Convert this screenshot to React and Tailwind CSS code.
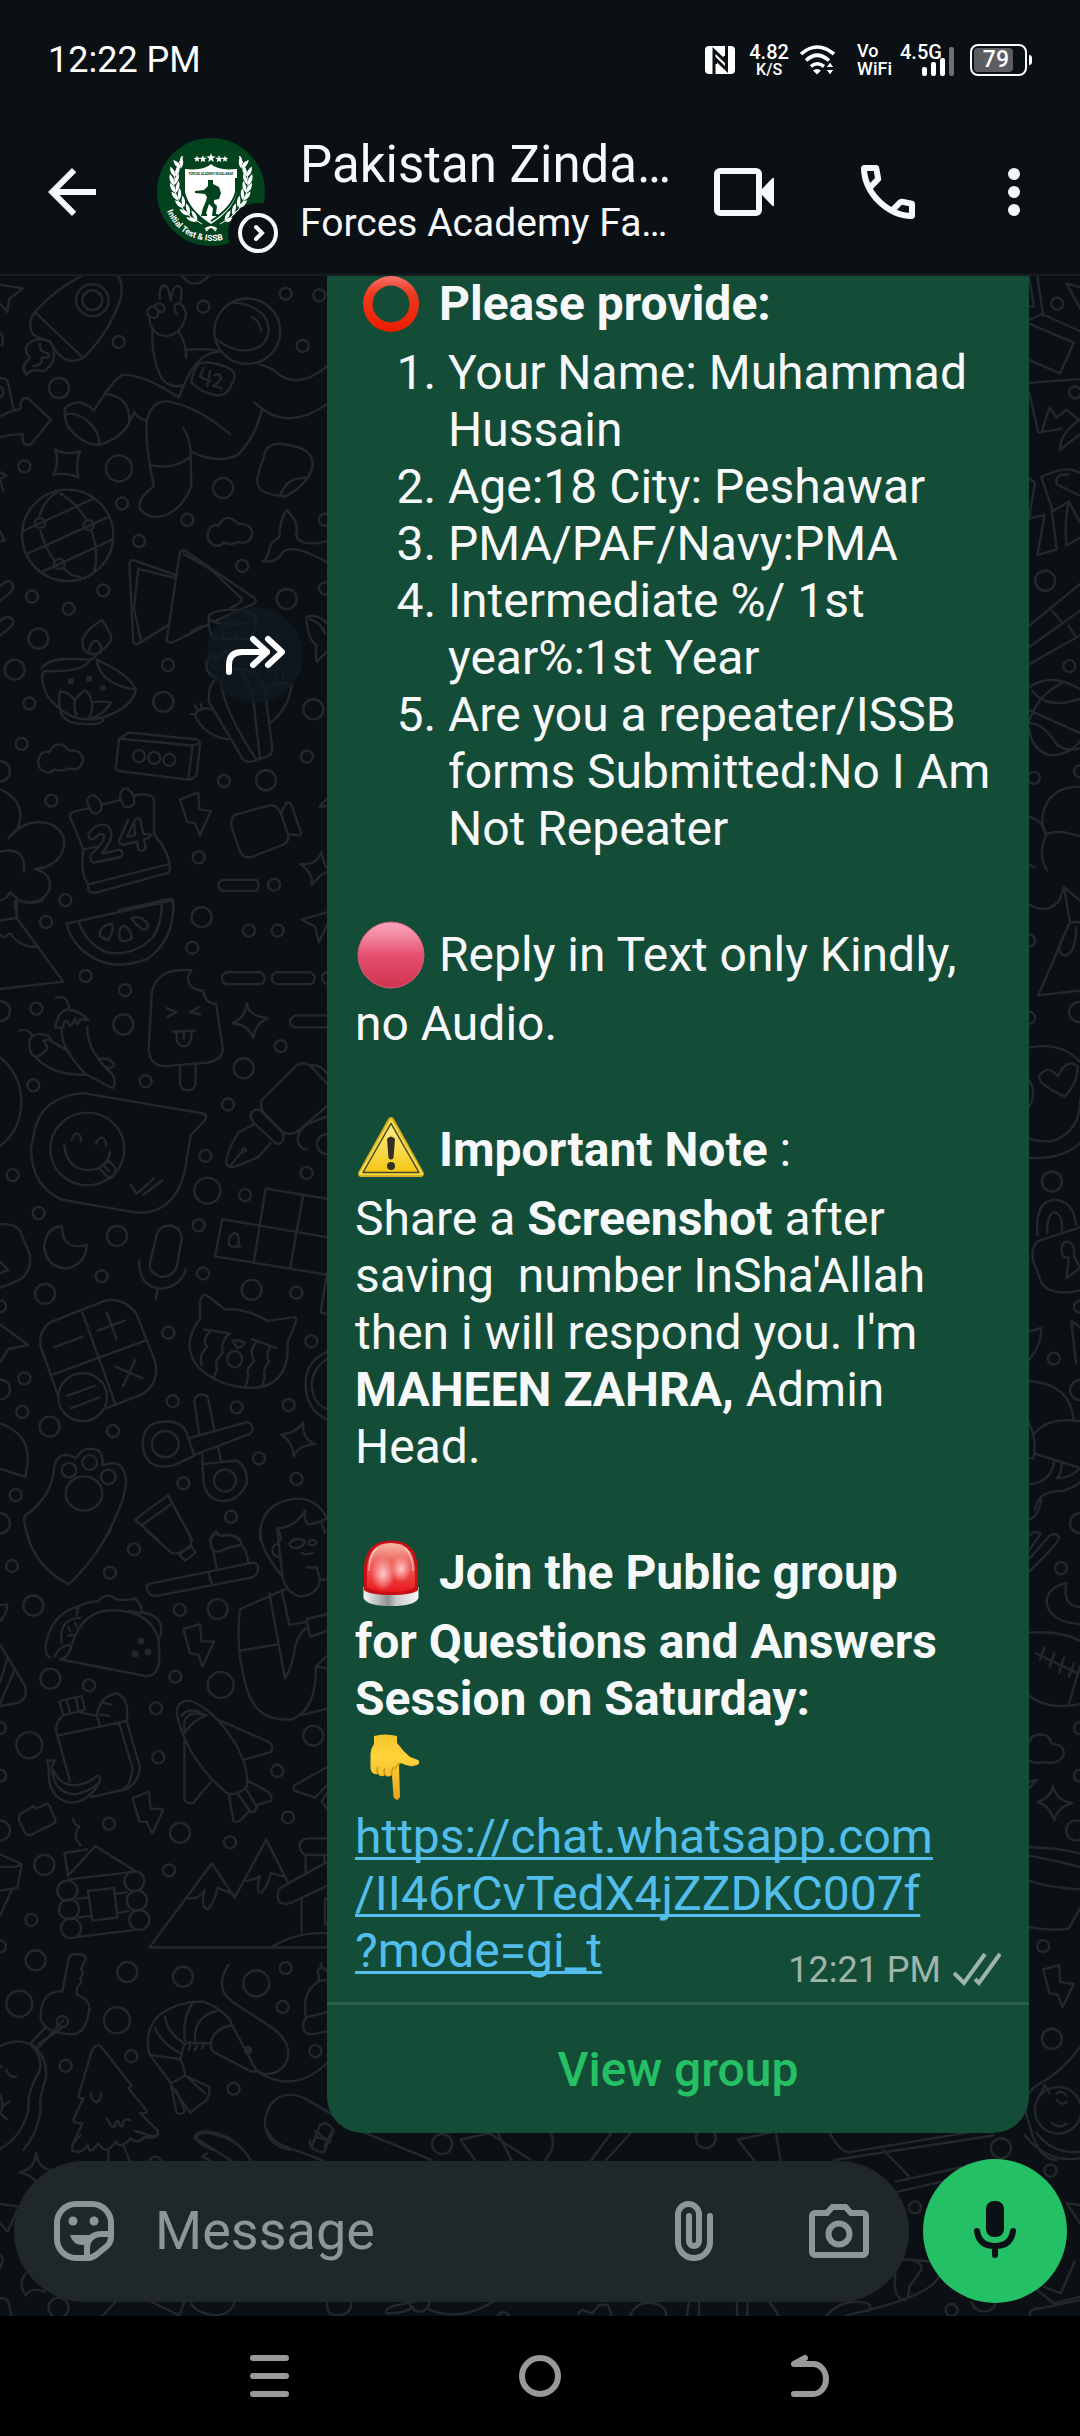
const DOT_SIZES = { s: 6, m: 10, l: 13 };

// Wallpaper doodles. Every tile keeps its own drawing units and is scaled into place.
const TILES = [
  {
    x: 0,
    y: 270,
    sx: 0.3333,
    sy: 0.4082,
    s: [[610, 90], [857, 58], [958, 62], [908, 186], [356, 176], [73, 481], [366, 572], [562, 612], [417, 664], [96, 800], [206, 830], [310, 785], [727, 725], [504, 968], [88, 1062], [65, 1161], [921, 1192], [672, 1252], [154, 1300], [596, 1439], [822, 1506], [196, 1544], [975, 612], [975, 780], [417, 1191], [463, 1195], [508, 1200]],
    m: [[177, 289], [669, 534], [115, 903], [44, 979], [490, 1058], [860, 806], [940, 1076], [798, 1250], [0, 1228]],
    l: [[357, 486]],
    paths: [
      // rocket
      "M250 12Q160 50 105 103Q80 130 98 157Q120 170 150 175Q190 240 250 216Q330 150 362 70Q372 30 350 12M105 103L250 216",
      "M228 74a49 39 0 1 0 98 0a49 39 0 1 0 -98 0M247 74a30 24 0 1 0 60 0a30 24 0 1 0 -60 0",
      "M160 190Q150 165 110 170Q70 180 80 205Q95 215 82 222Q60 240 80 257Q90 240 130 248Q170 230 160 190M120 180Q115 200 145 205Q155 215 125 215Q130 235 100 235",
      // arrow and star at the left edge
      "M0 36L68 45L27 72L22 103L0 82M0 265Q20 262 25 280L42 344M0 358Q35 345 62 340V325Q70 310 85 315L153 367L95 425Q75 435 68 418V402Q30 402 0 410M0 285Q12 290 10 303Q5 310 0 312M0 155Q15 160 5 185",
      // astronaut
      "M643 150a99 80 0 1 0 198 0a99 80 0 1 0 -198 0M650 170Q720 215 785 185Q825 150 790 110Q750 80 697 80M755 115Q780 125 783 150",
      "M447 112Q450 160 500 162Q550 155 558 108Q550 75 525 85Q520 100 532 108M442 100Q455 82 472 95Q480 115 462 118Q440 115 442 100M466 85Q485 75 495 95Q490 108 476 100M480 70Q475 40 495 38Q505 38 512 75Q520 30 540 42Q550 50 540 80",
      "M457 152Q455 220 485 265Q510 290 545 283M536 152Q560 180 558 216M558 196Q620 190 663 200Q590 200 550 285L536 312",
      "M780 232Q810 235 840 258Q900 290 981 236M764 325Q860 400 981 328M574 275Q580 240 600 228Q640 222 690 242Q715 255 695 280Q680 310 650 307Q600 300 574 275",
      "M610 240L600 262L632 272M630 248L622 285M642 258Q665 250 662 268Q650 280 640 284L665 290",
      "M536 312Q430 255 370 257Q345 262 282 344Q240 310 200 335Q185 350 205 385Q250 430 300 428Q370 410 390 370L403 348Q415 365 440 368M320 304Q390 310 388 372M194 355Q230 345 270 375Q300 400 297 428",
      "M440 368Q460 310 520 325Q600 340 690 402M440 368Q435 430 462 530Q410 560 420 585Q445 615 500 600Q550 580 574 530L572 450Q570 410 550 388M452 478Q520 490 572 458M572 445Q650 475 710 455Q760 420 785 345",
      // sticker, whale tail
      "M798 440Q815 422 850 427Q900 432 920 445Q945 462 935 490Q915 530 855 555Q800 550 785 540Q765 525 775 500ZM842 552Q860 505 922 510",
      "M860 588Q840 610 838 655Q810 665 805 695Q800 710 788 713Q830 720 850 690Q880 670 981 716M860 588Q900 620 888 650Q900 680 981 664",
      // clouds
      "M645 675Q615 665 625 640Q635 620 655 627Q680 590 715 622Q755 620 757 645Q750 675 715 666Q690 675 670 668Q660 678 645 675Z",
      "M137 1230Q107 1220 117 1195Q127 1175 147 1182Q172 1145 207 1177Q247 1175 249 1200Q242 1230 207 1221Q182 1230 162 1223Q152 1233 137 1230Z",
      "M165 440Q205 455 240 444Q225 475 235 508Q200 495 160 502Q180 470 165 440Z",
      // globe
      "M66 650a137 112 0 1 0 274 0a137 112 0 1 0 -274 0M68 640L280 560M80 696L325 605M125 740L338 660M170 545Q130 565 118 605M122 640Q135 680 165 715M180 547Q235 575 262 615M275 640Q300 700 280 742M190 730Q210 750 240 752M104 620a16 12 0 1 0 32 0a16 12 0 1 0 -32 0M250 625a16 12 0 1 0 32 0a16 12 0 1 0 -32 0M162 720a16 12 0 1 0 32 0a16 12 0 1 0 -32 0",
      // folded map
      "M388 718Q392 708 405 712L530 748M388 718L400 912Q408 920 418 914L505 870M415 732L528 755M415 732L402 830L422 905M540 690Q550 683 560 690L765 805Q772 812 760 818L640 862M540 690L500 908Q505 915 520 912L625 868M550 695L635 735L725 805Q728 815 690 828M565 895Q590 870 625 872",
      "M0 775Q30 750 40 775Q40 790 0 810M0 860Q25 840 40 860Q45 870 0 895M0 495L20 504L0 512L10 542M0 640L14 662L0 665",
      // diya lamp
      "M125 975Q150 945 268 955Q290 950 290 940Q340 915 333 895L307 857Q240 890 248 920Q255 945 290 940M268 955Q260 985 132 983Q118 1000 140 1040Q200 1110 290 1100Q390 1080 408 1030Q390 990 290 955Q300 1015 408 1028M268 932Q270 910 290 908Q310 920 300 940M180 1075Q175 1050 180 1032Q210 1035 225 1055Q240 1035 257 1030Q275 1045 275 1060Q310 1055 333 1060Q310 1090 275 1098M180 1075Q185 1110 250 1112Q310 1115 310 1100M230 1090Q220 1075 225 1055M268 1095Q280 1075 275 1060",
      // radio and calendar
      "M357 1150L385 1133L590 1150Q602 1155 600 1165L590 1235Q580 1250 560 1248L360 1228Q345 1225 348 1215ZM357 1148L575 1165L600 1160M578 1165L565 1245",
      "M210 1340Q205 1325 265 1320M302 1310L362 1298M400 1288Q460 1278 462 1300V1382Q510 1430 510 1465Q510 1480 490 1480L290 1525Q260 1530 265 1505Q240 1480 250 1420L210 1340M250 1420L300 1410M265 1505L510 1455M262 1305Q262 1285 283 1287Q310 1300 304 1322Q290 1338 275 1328ZM360 1290Q362 1268 382 1270Q408 1285 402 1308Q385 1322 370 1312Z",
      "M265 1382Q290 1350 325 1362Q340 1380 330 1400L305 1430L360 1420Q375 1430 362 1438L280 1452Q265 1445 275 1430Q315 1400 312 1385Q300 1375 285 1392Q268 1400 265 1382ZM385 1347L358 1395Q355 1408 370 1408L412 1400L415 1420Q430 1428 437 1415L432 1395Q455 1390 452 1382L430 1382L420 1345Q410 1340 402 1350L405 1385L382 1388L402 1352",
      // cactus behind the forward button
      "M626 850a71 18 0 1 0 142 0a71 18 0 1 0 -142 0M626 850Q625 900 650 904H745Q770 890 768 850M670 888V900M712 888V900M620 960L640 940L650 955L680 930L690 970M620 960Q615 990 650 1000Q620 1020 628 1060L730 1200Q745 1210 770 1200L805 1190Q820 1185 816 1165L795 1030Q780 980 710 975Q660 985 665 1020Q680 1090 770 1200M710 975Q760 1010 765 1090L780 1195M800 1030Q830 1000 875 1018Q865 1075 810 1110M640 1078Q600 1065 585 1090Q610 1140 685 1150M572 1088L582 1088M585 1065L590 1075M602 1062L605 1073M825 985L830 1000M850 985L848 1000",
      // bolt and camera
      "M540 1297L595 1280L598 1322L633 1325L600 1385L585 1355L562 1352Z",
      "M705 1335L805 1312Q830 1308 842 1330L865 1385Q868 1400 850 1408L755 1438Q730 1442 720 1425L695 1365Q690 1345 705 1335ZM842 1330L860 1305Q870 1302 875 1312L902 1375Q905 1385 895 1385L868 1382",
      "M965 1425Q970 1455 981 1465M965 1425Q950 1460 900 1455Q940 1475 935 1507Q960 1480 981 1475M981 1295L958 1315L981 1313",
      "M665 1494H770Q782 1507 770 1521H665Q645 1507 665 1494Z",
      // flower and leaf
      "M0 1272Q80 1300 55 1365L25 1392Q80 1340 150 1357Q210 1380 185 1430Q160 1465 105 1467Q160 1480 148 1520Q120 1560 60 1545L30 1525Q20 1540 0 1545M0 1425Q80 1410 72 1475M45 1545V1568",
      "M920 850Q950 840 981 865M920 850Q920 900 950 920Q945 940 950 960L981 935M930 855Q965 865 975 890",
      "M545 12Q580 55 630 12M355 1568L515 1540L522 1568M483 1550L487 1568",
    ],
  },
  {
    x: 0,
    y: 900,
    sx: 0.3333,
    sy: 0.4082,
    s: [[138, 54], [257, 186], [375, 221], [109, 266], [577, 117], [747, 75], [833, 75], [842, 358], [100, 454], [437, 444], [684, 501], [38, 674], [616, 627], [920, 669], [735, 723], [116, 767], [596, 797], [305, 922], [609, 915], [889, 962], [505, 1060], [934, 1081], [73, 1172], [67, 1254], [518, 1228], [710, 1243], [866, 1237], [339, 1301], [777, 1368], [890, 1418], [550, 1429], [47, 1458], [693, 1511], [0, 995]],
    m: [[605, 42], [370, 305], [731, 412], [351, 823], [135, 965], [755, 955], [149, 1290], [0, 272], [0, 1199], [0, 1527], [981, 598]],
    l: [[622, 712]],
    paths: [
      // tent and watermelon
      "M0 50L50 44L190 200L0 218M50 0V44M0 85Q10 95 20 88Q30 75 38 90Q70 118 110 114M50 0Q90 15 130 0",
      "M200 58L520 0Q525 100 440 145Q330 180 250 125Q210 95 200 58M235 52Q260 110 320 128Q400 140 460 90Q490 50 484 0M300 88Q295 65 335 58Q345 70 325 98Q308 95 300 88M358 88Q355 65 375 63Q395 75 395 95Q370 105 360 98ZM395 45Q420 35 443 58Q445 75 430 73Q405 60 395 45",
      // ice pop
      "M575 172Q460 165 455 235L446 365Q450 410 500 407L625 398Q675 390 667 355L648 254Q615 255 610 222Q560 220 565 185ZM540 405V450Q545 467 565 466Q585 465 587 450V402M500 265L530 275L503 286M598 262L570 275L600 280M518 322L585 320M530 325V345Q540 362 560 357Q575 350 575 322M552 325V340",
      // chillies
      "M168 240Q205 230 208 270M165 312Q180 260 215 270Q245 275 265 295L240 292Q232 315 225 290Q210 320 205 300Q190 290 190 312ZM185 315Q180 360 255 425Q330 460 340 460Q350 440 335 425Q260 370 262 310M58 320Q85 315 97 332M90 365Q80 330 120 328Q150 330 152 340L130 345Q160 365 110 385Q90 380 90 365ZM150 345Q190 360 210 375M110 388Q160 430 260 428M295 390Q335 385 343 405Q335 415 315 408",
      // dashes
      "M680 177H780Q795 182 794 192Q792 205 780 206H680Q665 203 666 190Q668 180 680 177ZM830 177H930Q945 182 944 192Q942 205 930 206H830Q815 203 816 190Q818 180 830 177ZM981 177Q965 180 966 192Q970 205 981 205M981 283H885Q870 290 870 298Q873 310 885 312H981",
      "M741 253Q745 285 803 289Q765 305 760 338Q745 305 697 302Q735 290 741 253ZM981 30L905 48L945 65L957 104L981 60",
      // speech bubble with a face
      "M250 473L610 523Q620 525 617 537L572 577L553 670Q520 770 410 766L190 735Q95 705 93 610L105 560Q130 480 250 473ZM151 610a111 89 0 1 0 222 0a111 89 0 1 0 -222 0M215 588Q220 570 235 573Q245 580 243 592M288 598Q295 580 310 583Q320 592 317 602M193 600Q200 660 265 662Q320 660 330 618M298 658Q310 645 328 640L345 655Q350 675 330 683ZM312 650L328 665M392 698L410 720L462 682M430 722L488 686",
      "M0 385Q65 430 64 495Q60 570 0 602",
      // pen
      "M785 490L890 405Q910 395 930 405L981 450M785 490Q780 505 790 520L850 570Q875 578 895 565L981 505M752 530Q755 510 780 515L850 572Q855 595 830 598L760 545ZM765 548L715 570Q690 600 678 640Q680 655 700 655L775 630L812 595M690 652L730 612M981 530L920 550Q885 575 895 595Q905 612 920 610M935 405Q965 405 981 425",
      // tiles
      "M797 707L981 732M797 707L762 885M667 782L981 826M667 782L645 873L981 918M910 722L870 903M981 915L962 1010L981 1014M715 845Q720 820 705 815Q680 825 688 845Q700 855 715 845Q712 855 722 848",
      // moon and microphone
      "M186 800Q185 860 260 845Q260 890 200 903Q140 900 132 850Q140 800 186 800Z",
      "M470 820Q480 795 515 798Q545 805 545 830L530 900Q515 925 480 923Q445 910 450 890ZM418 883Q415 945 480 952Q540 950 558 905M473 952L467 977",
      // calculator
      "M150 1035L310 983Q370 970 410 1015L465 1130Q480 1180 430 1210L320 1245M150 1035Q115 1055 122 1095L175 1215M247 1010L347 1237M158 1163L438 1079M163 1096L247 1070M292 1055L376 1030M320 1010L350 1076M347 1143L427 1172M406 1127L369 1191M175 1218a73 59 0 1 0 146 0a73 59 0 1 0 -146 0M201 1215L284 1190M214 1245L297 1219",
      "M0 795Q40 790 60 810L90 870Q95 910 60 930L0 950M0 885L25 907L0 914M0 1040L85 1090L25 1100L0 1132",
      // cat
      "M600 1025L600 985Q605 965 618 967L675 1003Q740 1000 803 1031L885 1022Q892 1025 887 1035L863 1083Q870 1190 760 1195Q660 1195 595 1145Q540 1090 600 1025ZM612 1052L690 1062M757 1076L828 1098M628 1058Q605 1080 622 1095Q595 1115 605 1140M683 1065Q660 1090 668 1110Q640 1130 652 1150L640 1172M768 1085Q745 1105 763 1130Q735 1150 745 1165L738 1190M808 1098Q795 1120 808 1130Q785 1155 795 1168L787 1190M697 1080Q715 1075 735 1085Q725 1097 712 1097ZM682 1125a22 20 0 1 0 44 0a22 20 0 1 0 -44 0",
      // scissors
      "M456 1333a40 32 0 1 0 80 0a40 32 0 1 0 -80 0M583 1362L520 1385Q440 1400 428 1340Q425 1280 490 1278Q545 1275 560 1305ZM570 1318L740 1279Q760 1282 757 1300L750 1308L588 1358M597 1308L583 1225Q590 1208 612 1212Q625 1215 625 1225L643 1298M607 1358V1382L710 1373Q745 1390 740 1430Q715 1475 660 1472Q620 1465 612 1430L607 1382M655 1340L662 1372M642 1422a33 27 0 1 0 66 0a33 27 0 1 0 -66 0",
      "M910 1280Q905 1320 946 1333Q895 1335 881 1363Q878 1325 843 1310Q890 1305 910 1280ZM981 1107Q915 1130 917 1190Q920 1250 981 1272M981 1125Q935 1150 935 1190Q940 1235 981 1247",
      // paw
      "M88 1568Q70 1530 73 1510Q160 1460 163 1385Q180 1345 228 1368Q250 1335 295 1348Q310 1360 308 1385Q370 1365 378 1420Q380 1470 312 1568M185 1397a22 18 0 1 0 44 0a22 18 0 1 0 -44 0M247 1378a22 18 0 1 0 44 0a22 18 0 1 0 -44 0M303 1413a22 18 0 1 0 44 0a22 18 0 1 0 -44 0M197 1454a55 42 0 1 0 110 0a55 42 0 1 0 -110 0",
      "M0 1282Q95 1310 82 1385L76 1413L0 1393M405 1518L504 1458L577 1568M405 1518L475 1568M428 1530L518 1478M630 1568L648 1548L660 1558Q700 1550 722 1568",
      "M780 1568Q775 1480 880 1467Q950 1462 981 1515M832 1540Q850 1568 840 1568M832 1540Q890 1535 915 1495Q910 1520 925 1530Q950 1528 981 1515M965 1525L975 1550",
    ],
  },
  {
    x: 0,
    y: 1530,
    sx: 0.3333,
    sy: 0.3954,
    s: [[402, 49], [36, 91], [330, 108], [539, 202], [267, 393], [526, 371], [468, 451], [475, 575], [832, 609], [864, 727], [327, 743], [690, 790], [507, 861], [94, 986], [857, 1108], [848, 1206], [946, 1318], [394, 1331], [197, 1355], [701, 1413], [0, 621], [0, 1053], [0, 501]],
    m: [[100, 191], [653, 200], [151, 376], [940, 520], [540, 766], [133, 847], [107, 1088], [382, 1118], [549, 1130], [0, 760], [202, 912], [207, 959], [213, 1007], [403, 888], [411, 937], [418, 986]],
    l: [[662, 392], [88, 544], [769, 1147], [58, 1198], [351, 1240]],
    paths: [
      "M78 0Q100 90 205 137Q260 100 332 0M437 0L515 58Q540 65 572 38Q580 30 560 0M538 62L573 40L587 57L555 78Z",
      // toothbrush
      "M440 145Q440 135 455 135L755 83Q780 82 773 105Q770 115 755 120L475 166Q445 170 440 145ZM625 108L635 135M650 98L640 52Q620 25 648 3Q655 20 680 12Q720 15 725 38Q740 50 745 82M640 52Q660 58 670 50Q700 40 725 38",
      // bearded man
      "M780 0Q780 50 845 115M832 0L848 120Q860 160 900 168Q955 165 960 125L950 95L922 95M838 35Q815 35 817 55Q825 70 842 68M868 35Q885 15 915 28Q910 45 890 45Q870 45 868 35M925 35Q930 20 948 28Q950 40 930 38M905 58Q920 65 938 58M960 125H981M855 150L720 200Q705 300 740 400Q770 490 880 478Q950 450 948 345L981 318M718 305L830 290M808 160L855 375Q880 340 885 295Q900 255 925 245M845 152L868 240L918 233M920 225L981 213M920 225L930 270L981 255M948 345L981 350M905 468L981 452",
      // taco
      "M150 322Q130 315 140 280Q160 210 235 193Q270 180 295 180Q320 155 350 175Q370 180 405 173Q425 185 425 208Q490 215 483 260Q480 275 475 275Q490 370 440 370L180 327Q205 325 215 290Q250 200 340 203Q450 205 475 275M235 193L230 215M185 285Q175 225 240 222M165 320Q175 295 207 290L215 300M205 245L210 255M225 235L230 245M205 268L218 265M385 205L425 210",
      "M550 250L600 238L605 282L642 282L608 345L595 315L570 312Z",
      "M0 190L22 188Q20 215 0 230M0 290L75 395Q85 430 50 438L0 445M22 325L0 385M45 350L0 440",
      // grocery bag
      "M178 435Q180 430 245 420L255 455L190 468ZM200 432L210 460M228 425L235 455M190 468Q160 490 172 520L380 483Q390 425 350 413Q300 420 290 470L235 460M172 520L210 635M380 483L420 600Q415 640 380 655L275 675M357 487L397 600Q395 645 370 655M290 470L300 495M312 437L335 442M300 467L327 470M142 583H165L155 600Q180 650 230 645Q270 640 290 622Q305 620 297 640Q260 695 200 688Q140 670 147 605ZM155 605Q165 670 230 668Q270 660 297 640",
      // shuttle
      "M530 465Q530 430 570 432Q640 450 710 545Q750 610 740 650Q710 675 680 665Q560 580 530 465ZM555 512Q540 450 620 468Q580 480 555 512M545 470Q560 450 600 460M655 480L805 535Q825 545 812 562L735 580M553 535V680Q560 695 580 690L632 638M687 670L700 735Q715 745 735 722L748 710L710 662M748 710Q765 720 770 700L735 650M770 695L812 685Q820 670 800 660L745 635",
      "M398 678L447 662L452 705L490 706L457 768L440 738L418 737Z",
      "M58 720L100 698L108 705L140 692Q150 695 152 705L167 735Q165 742 155 745L90 772Q80 772 75 765L57 735ZM218 730Q225 748 238 750Q215 775 242 797",
      // cabin
      "M193 817L262 808M193 817L204 870M204 875L286 799L405 862M204 884L405 864M225 1030L400 1012M230 933L263 930M350 920L380 916M235 980L270 976M355 968L385 964M264 913L342 905L353 980L277 988Z",
      "M0 820L65 845L52 905L0 912M65 845L45 852H0M35 912L0 975",
      // mountains and lighthouse
      "M448 1056L636 843L704 930L799 783L863 890M448 1056H981M560 932Q600 935 614 910Q600 960 625 958Q645 940 652 905L700 920M735 888Q765 885 780 875Q765 920 785 917Q810 890 812 868L855 877M815 1055Q890 1015 981 1020M905 930V1018M917 822V870M981 780H920Q895 785 900 805Q905 820 920 822H981M981 840L840 905Q825 925 840 942Q855 950 875 942L981 900M973 822V838M981 932H975V997H981",
      "M981 600L885 645Q875 655 885 660L945 677L981 645M965 687L981 705M965 687L981 665",
      // key
      "M187 1167L207 1080Q215 1070 240 1073Q262 1075 255 1090L243 1110Q255 1120 240 1135Q250 1145 232 1155L230 1175Q280 1190 265 1225Q255 1280 205 1275Q130 1270 122 1235Q120 1165 187 1167ZM170 1243a17 14 0 1 0 34 0a17 14 0 1 0 -34 0M190 1240L115 1310L90 1300L140 1255M182 1262L115 1300",
      // sleeping sausage
      "M0 1305Q55 1285 90 1300Q130 1330 118 1370Q80 1420 85 1470Q60 1540 0 1565M110 1312Q145 1345 137 1390Q115 1440 122 1470Q110 1530 70 1568M20 1365Q25 1385 48 1383M0 1355L5 1358M0 1430Q15 1450 0 1475M5 1460L28 1445M5 1478L20 1490",
      // fir tree
      "M275 1318Q290 1295 305 1308L395 1405L385 1412L440 1468Q440 1478 420 1475L472 1518Q480 1535 455 1533Q430 1525 405 1520M275 1318L235 1432Q240 1440 250 1437L220 1490Q220 1502 248 1500L217 1555M272 1425Q275 1445 290 1448Q305 1440 302 1425M320 1488Q335 1515 345 1508Q350 1490 355 1495Q360 1510 368 1508Q370 1485 390 1492",
      // shrimp
      "M775 1368L755 1370L640 1320Q625 1300 640 1280Q660 1255 697 1253Q680 1215 610 1193Q540 1190 480 1225Q430 1265 448 1325L513 1400M455 1328L540 1338Q555 1360 555 1380L513 1400M580 1193Q545 1235 555 1290M655 1215Q580 1230 585 1290M495 1230Q500 1270 555 1300M465 1260Q485 1300 545 1325L540 1338M545 1325Q550 1300 560 1297L630 1298M570 1295Q572 1305 565 1315M590 1297Q592 1307 585 1315M612 1297Q612 1307 605 1312M697 1253L770 1368M555 1380L628 1408Q630 1430 620 1442L570 1473L513 1405L530 1475Q545 1480 555 1470L528 1415M560 1382L615 1425",
      "M685 1100Q640 1160 700 1195L810 1255Q870 1290 865 1330Q850 1380 790 1375L770 1368Q880 1430 981 1348",
      "M735 1316a9 8 0 1 0 18 0a9 8 0 1 0 -18 0",
      "M981 1220L920 1232Q905 1245 912 1265Q920 1278 940 1275L981 1268M917 1230Q905 1165 960 1140M965 1095L960 1110Q945 1115 958 1125L955 1140L981 1138M965 1105L981 1115",
      "M1000 1480L920 1440Q850 1410 810 1455Q780 1500 810 1540Q830 1560 870 1568M935 1560L960 1505Q985 1495 998 1515L975 1560M945 1520L985 1545",
      "M585 1540Q600 1515 650 1530Q700 1540 730 1568M585 1540Q610 1560 640 1568",
    ],
  },
  {
    x: 320,
    y: 270,
    sx: 0.4847,
    sy: 0.3827,
    s: [[1521, 88], [1546, 1035], [1473, 1327], [1558, 320], [1568, 1310]],
    m: [[1496, 812]],
    l: [],
    paths: [
      "M1463 20L1473 95H1463M1480 16L1492 120M1463 130L1490 115L1568 160M1463 140L1555 190L1527 270L1463 235M1463 295L1568 285M1463 320L1482 425L1530 415M1490 420L1505 360L1520 385L1540 365L1568 395M1568 390Q1525 430 1527 470Q1545 450 1568 430M1540 35L1568 100M1540 35L1568 45",
      "M1488 540L1520 525Q1545 515 1568 530M1488 540L1512 630L1545 605M1568 590L1520 560Q1515 530 1545 535M1463 545L1475 555L1463 650L1495 640L1480 745L1520 730L1510 630M1545 605L1568 660M1545 605Q1535 660 1540 720L1568 700M1463 930L1568 820M1463 985L1568 890M1463 1030L1568 955M1510 890L1530 920M1545 930L1560 960",
      "M1463 1090Q1510 1050 1568 1095M1470 1100Q1500 1150 1568 1120M1463 1150L1568 1210M1530 1080Q1480 1110 1463 1180M1463 1185Q1490 1180 1520 1240Q1540 1260 1568 1250M1463 1200Q1470 1260 1510 1268Q1550 1265 1568 1230",
      "M1568 1350Q1500 1350 1490 1430Q1490 1460 1498 1475M1463 1430Q1490 1435 1498 1475Q1480 1530 1500 1568M1568 1480Q1520 1460 1498 1475M1463 1555L1475 1560",
    ],
  },
  {
    x: 320,
    y: 870,
    sx: 0.4847,
    sy: 0.4082,
    s: [[1514, 1197], [1463, 362], [1463, 173], [1568, 1070]],
    m: [[1510, 763], [1566, 348], [1568, 1274]],
    l: [],
    paths: [
      "M1463 85Q1500 110 1525 75L1535 42L1568 75M1535 42L1547 128H1568M1547 128L1482 307L1568 295M1535 160Q1515 200 1535 210Q1560 205 1560 140",
      "M1463 435Q1530 420 1568 470M1568 560Q1570 640 1510 665Q1480 665 1463 658M1463 705Q1530 710 1568 670M1463 515Q1480 545 1463 580M1537 555Q1480 525 1484 505Q1500 475 1523 505Q1540 460 1563 480Q1565 520 1537 555Z",
      "M1480 895Q1475 810 1515 808Q1555 810 1560 870M1500 890Q1500 840 1517 838Q1535 850 1530 885M1480 910L1568 875M1480 910Q1465 930 1472 960L1490 1015Q1510 1045 1568 1030M1530 930Q1530 910 1543 910Q1560 920 1555 945L1568 975L1540 1000L1545 950Q1530 950 1530 930",
      "M1463 1130L1488 1122Q1490 1160 1463 1200M1550 1105L1568 1120M1550 1105L1560 1210M1463 1252Q1550 1260 1555 1350M1475 1380Q1500 1340 1568 1350M1463 1355Q1480 1400 1472 1442L1463 1440M1475 1430L1568 1465M1515 1445Q1510 1500 1463 1505M1530 1455Q1530 1480 1520 1490Q1550 1490 1568 1465M1475 1568Q1480 1520 1530 1522Q1560 1510 1568 1500",
    ],
  },
  {
    x: 320,
    y: 1500,
    sx: 0.4847,
    sy: 0.4209,
    s: [[1529, 162], [1492, 1060], [1568, 542], [1568, 655]],
    m: [[1568, 55], [1510, 1280], [1405, 1540], [252, 1530], [1560, 785], [796, 1516]],
    l: [],
    paths: [
      "M1488 0Q1480 45 1463 45M1463 85Q1475 70 1487 80L1463 120M1463 140L1505 85Q1520 75 1525 90Q1525 100 1463 170",
      "M1540 197Q1530 250 1568 255M1540 197Q1495 210 1500 250Q1510 290 1568 295M1463 315Q1530 310 1568 335M1463 465Q1500 500 1568 485M1568 395L1545 485M1478 365L1560 410M1495 350L1485 380M1515 365L1505 395M1535 375L1525 410M1555 388L1545 420",
      "M1463 575Q1470 550 1500 560Q1510 575 1510 580Q1540 580 1533 610Q1520 630 1495 622Q1480 628 1463 620M1463 670L1478 665L1463 685M1512 680Q1520 715 1552 720Q1520 730 1515 762Q1505 725 1480 718Q1510 705 1512 680M1463 825Q1520 825 1568 840M1463 845Q1530 860 1568 872M1463 905Q1500 920 1568 925M1463 1015Q1510 1025 1545 1018L1568 970",
      "M1492 1115L1525 1105L1527 1145L1555 1150L1532 1205L1522 1175L1505 1172Z",
      "M1568 1300Q1530 1360 1480 1390Q1440 1420 1463 1480Q1480 1568 1520 1568M1475 1450a48 55 0 1 0 96 0a48 55 0 1 0 -96 0M1485 1415L1495 1390L1505 1410M1520 1410Q1530 1400 1540 1415M1510 1480Q1525 1495 1540 1482M1520 1425Q1530 1440 1540 1430",
      "M85 1500L230 1568M290 1520L365 1500M290 1520L320 1568M365 1500L395 1568M350 1505L435 1568M475 1500Q490 1535 465 1568M600 1505L560 1568M640 1505L590 1568M862 1520L940 1500L950 1568M862 1520L895 1568M1050 1500Q1070 1545 1090 1550L1350 1500M1060 1568L1390 1510",
    ],
  },
  {
    x: 0,
    y: 2130,
    sx: 0.3444,
    sy: 0.3333,
    s: [[450, 98], [2657, 232], [1462, 565], [3050, 122], [2763, 540]],
    m: [[170, 533], [1218, 515]],
    l: [],
    paths: [
      "M105 68Q110 120 160 122M105 68Q100 120 57 127Q90 135 105 155M0 222L55 230M0 280L22 305L50 240M75 430Q50 460 75 497Q85 470 130 485M0 505Q20 500 25 520L33 556M0 375Q15 380 0 415M235 15Q205 40 210 62Q235 75 255 45Q260 80 285 40Q310 80 335 35Q350 60 380 25Q400 45 420 20Q450 30 460 12M315 55V92M360 50L376 92",
      "M565 22Q570 0 610 5Q690 20 728 92M565 22L672 92M600 70L588 80L610 92M775 0Q790 35 830 50L940 92M900 30Q895 60 940 68L970 0M915 20L960 35M300 556L335 516M440 516L520 556L535 516M555 516Q560 545 620 556Q670 556 682 516M950 516Q945 556 980 556Q1020 556 1020 516M1200 516Q1110 530 1122 550Q1180 550 1200 530M1240 535Q1330 580 1430 516",
      "M2600 155L2790 112M2608 185L2735 155M2565 60L2640 140M2610 390Q2640 385 2730 400Q2740 440 2700 470Q2660 500 2560 530L2460 556M2600 430Q2590 500 2625 512Q2640 500 2640 470L2675 420Q2680 400 2650 392M3030 470L3080 490L3120 395M3000 470L3060 520L3136 500M3098 220L3136 280M3098 220L3136 225M2975 15Q3040 100 3136 85M3010 10Q3060 75 3136 65M2400 556Q2440 510 2500 516Q2540 520 2520 545M1680 550L1690 540L1720 550L1740 525L1765 525L1775 556M1830 556Q1850 510 1900 520Q1935 530 1935 556M2000 516L1995 556M2030 516V556M2140 516V556M2170 516V556M2235 516Q2250 540 2260 556",
      "M2820 516Q2830 545 2860 545Q2890 540 2890 516M2990 556Q2990 535 3020 535L3136 510",
    ],
  },
];

function Doodles() {
  return (
    <svg
      aria-hidden="true"
      className="absolute inset-0 h-full w-full"
      viewBox="0 276 1080 2040"
      preserveAspectRatio="xMidYMin slice"
      fill="none"
      stroke="#22282c"
      strokeWidth="2.4"
      strokeLinecap="round"
      strokeLinejoin="round"
    >
      {TILES.map((t) => (
        <g key={`${t.x}-${t.y}`}>
          <g transform={`translate(${t.x} ${t.y}) scale(${t.sx} ${t.sy})`}>
            {t.paths.map((d) => (
              <path key={d} d={d} vectorEffect="non-scaling-stroke" />
            ))}
          </g>
          {Object.entries(DOT_SIZES).map(([size, r]) =>
            t[size].map(([x, y]) => (
              <circle key={`${size}${x}-${y}`} cx={t.x + x * t.sx} cy={t.y + y * t.sy} r={r} />
            ))
          )}
        </g>
      ))}
      <g fill="#22282c" stroke="none">
        <circle cx="71" cy="681" r="3" />
        <circle cx="89" cy="679" r="3" />
        <circle cx="103" cy="688" r="3" />
        <circle cx="141" cy="1641" r="3.5" />
        <circle cx="135" cy="1654" r="3.5" />
        <circle cx="148" cy="1652" r="3.5" />
        <circle cx="248" cy="2050" r="4" />
        <circle cx="244" cy="1150" r="3" />
      </g>
    </svg>
  );
}

function StatusBar() {
  return (
    <div className="flex h-29 items-center justify-between px-12 pt-1 text-white">
      <time className="text-[36px] leading-10">12:22 PM</time>
      <div className="flex items-center">
        <svg className="h-7 w-[30px]" viewBox="0 0 30 28" aria-label="NFC">
          <rect width="30" height="28" rx="4" fill="#fff" />
          <path d="M9 28V4.500L20 15V10M21.500 0V23.500L10.500 13V18" fill="none" stroke="#0b1014" strokeWidth="3" />
        </svg>
        <div className="ml-3 flex w-11 flex-col items-center font-medium">
          <span className="text-[20px] leading-5">4.82</span>
          <span className="text-[16px] leading-4">K/S</span>
        </div>
        <svg className="ml-2 h-[30px] w-[38px]" viewBox="0 0 38 30" fill="none" stroke="#fff" strokeWidth="3.600" aria-label="Wi-Fi">
          <path d="M2 9Q18 -5 35 9M7 15.500Q18 5 30 15.500M12 21.500Q18 16 25 21.500" />
          <path d="M14 25.500Q18 22.500 22 25.500L18 29.500Z" fill="#fff" stroke="none" />
          <path d="M27 22.500L31 17L35 22.500ZM27 24.500L31 30L35 24.500Z" fill="#fff" stroke="#0b1014" strokeWidth="1" />
        </svg>
        <div className="ml-5 flex flex-col text-[18px] leading-[18px] font-medium">
          <span>Vo</span>
          <span>WiFi</span>
        </div>
        <div className="relative ml-2 h-8 w-[54px]">
          <span className="absolute top-0 left-0 text-[20px] leading-4 font-medium">4.5G</span>
          <svg className="absolute inset-0 h-full w-full" viewBox="0 0 54 32" aria-label="Signal">
            <g fill="#fff">
              <rect x="22" y="23" width="5" height="9" rx="2" />
              <rect x="31" y="18" width="5" height="14" rx="2" />
              <rect x="40" y="14" width="5" height="18" rx="2" />
            </g>
            <rect x="49" y="3" width="5" height="29" rx="2" fill="#6d7073" />
          </svg>
        </div>
        <div className="ml-4 flex h-8 w-[57px] items-center rounded-lg border-2 border-white p-0.5">
          <div className="flex h-full w-[39px] items-center justify-end rounded bg-[#5b5d60] pr-1 text-[23px] leading-6 font-medium">79</div>
        </div>
        <div className="ml-0.5 h-2.5 w-[3px] rounded-r bg-white" />
      </div>
    </div>
  );
}

function Star({ x, y, r }) {
  const pts = Array.from({ length: 10 }, (_, i) => {
    const a = (Math.PI / 5) * i - Math.PI / 2;
    const d = i % 2 ? r * 0.42 : r;
    return `${x + d * Math.cos(a)},${y + d * Math.sin(a)}`;
  });
  return <polygon points={pts.join(" ")} fill="#fff" />;
}

const LEAVES = [[21, 25, -25], [17, 33, -10], [16, 41, -2], [17, 49, -12], [19, 57, -22], [23, 65, -32], [28, 73, -42], [35, 80, -55]];

function Avatar() {
  return (
    <svg className="h-[120px] w-[126px] shrink-0" viewBox="0 0 126 120" role="img" aria-label="Forces Academy Faisalabad">
      <circle cx="54" cy="54" r="54" fill="#02431d" />
      <Star x={40} y={21} r={3.5} />
      <Star x={46} y={21} r={4} />
      <Star x={54} y={20} r={4.8} />
      <Star x={62} y={21} r={4} />
      <Star x={68} y={21} r={3.5} />
      {[0, 1].map((side) => (
        <g key={side} fill="#fff" transform={side ? "translate(108 0) scale(-1 1)" : undefined}>
          {LEAVES.map(([x, y, a]) => (
            <g key={y} transform={`rotate(${a} ${x} ${y})`}>
              <path d={`M${x} ${y + 6}q-5 -4 -3 -11q4 4 4 9zM${x + 1} ${y + 6}q6 -4 5 -11q-5 4 -5 9z`} />
            </g>
          ))}
          <path d="M26 18Q15 35 17 50Q22 75 45 86" fill="none" stroke="#fff" strokeWidth="1" />
        </g>
      ))}
      <path d="M48 91Q54 86 59 93M60 91Q54 86 49 93" fill="none" stroke="#fff" strokeWidth="1.500" />
      <path d="M54 26Q61 33 80 31V54Q76 72 54 86Q32 72 28 54V31Q47 33 54 26Z" fill="#fff" />
      <path d="M79 40V54Q75 70 54 83" fill="none" stroke="#02431d" strokeWidth="2" />
      <text x="54" y="37" textAnchor="middle" fontSize="3" fontWeight="700" fill="#02431d">FORCES ACADEMY FAISALABAD</text>
      <path d="M51 42h5v4l6 3 2 6-2 6-5 1v3l3 3-1 8h2v2h-6l1-8-4-4-2 6-1 4h1v2h-6l2-8 3-7 1-4-2-3-10-1v-2l9-1 4-4Z" fill="#02431d" />
      <path id="motto" d="M10 73Q22 101 54 103Q70 103 82 95" fill="none" />
      <text fontSize="8.500" fontWeight="700" fill="#fff">
        <textPath href="#motto">Initial Test &amp; ISSB</textPath>
      </text>
      <circle cx="101" cy="95" r="30" fill="#0b1014" />
      <circle cx="101" cy="95" r="18" fill="none" stroke="#f7f8fa" strokeWidth="4" />
      <path d="M99 89l6 6-6 6" fill="none" stroke="#f7f8fa" strokeWidth="4" strokeLinecap="round" />
    </svg>
  );
}

function ChatHeader() {
  return (
    <header className="flex h-[160px] items-center border-b-2 border-[#171d20] pr-[30px] pb-1.5 pl-9 text-[#f7f8fa]">
      <button aria-label="Back" className="shrink-0">
        <svg className="size-18" viewBox="0 0 24 24" fill="currentColor">
          <path d="M20 11H7.830l5.590-5.590L12 4l-8 8 8 8 1.410-1.410L7.830 13H20z" />
        </svg>
      </button>
      <div className="mt-3 ml-[49px]">
        <Avatar />
      </div>
      <div className="ml-[17px] min-w-0 flex-1">
        <h1 className="truncate text-[51px] leading-[60px]">Pakistan Zinda…</h1>
        <p className="mt-0.5 truncate text-[39px] leading-[52px]">Forces Academy Fa…</p>
      </div>
      <button aria-label="Video call" className="shrink-0">
        <svg className="size-18" viewBox="0 0 24 24" fill="currentColor">
          <path fillRule="evenodd" d="M4 4h12a2 2 0 0 1 2 2v5l3.400-3.600q.6-.4.6.2v8.800q0 .6-.6.2L18 13v5a2 2 0 0 1-2 2H4a2 2 0 0 1-2-2V6a2 2 0 0 1 2-2zm0 2v12h12V6z" />
        </svg>
      </button>
      <button aria-label="Voice call" className="ml-18 shrink-0">
        <svg className="size-18" viewBox="0 0 24 24" fill="currentColor">
          <path d="M19.950 21q-3.125 0-6.175-1.362t-5.550-3.863-3.862-5.550T3 4.050q0-.45.3-.75t.75-.3H8.100q.35 0 .625.238t.325.562l.65 3.500q.05.4-.025.675T9.400 8.450L6.975 10.900q.5.925 1.187 1.787t1.513 1.663q.775.775 1.625 1.438T13.100 17l2.350-2.350q.225-.225.588-.337t.712-.063l3.450.7q.35.1.575.363T21 15.900v4.050q0 .45-.3.75t-.75.3zM6.025 9l1.650-1.650L7.250 5H5.025q.125 1.025.35 2.025T6.025 9m8.950 8.950q.975.425 1.988.675T19 18.950v-2.200l-2.350-.475z" />
        </svg>
      </button>
      <button aria-label="More options" className="ml-[54px] shrink-0">
        <svg className="size-18" viewBox="0 0 24 24" fill="currentColor">
          <circle cx="12" cy="6" r="2" />
          <circle cx="12" cy="12" r="2" />
          <circle cx="12" cy="18" r="2" />
        </svg>
      </button>
    </header>
  );
}

function Emoji({ label, children }) {
  return (
    <svg className="mr-3 inline-block size-18 shrink-0" viewBox="0 0 72 72" role="img" aria-label={label}>
      {children}
    </svg>
  );
}

function HollowCircle() {
  return (
    <Emoji label="Hollow red circle">
      <linearGradient id="ring" x1="0" y1="0" x2="0" y2="1">
        <stop offset="0" stopColor="#f2766a" />
        <stop offset=".3" stopColor="#ee3a20" />
        <stop offset="1" stopColor="#ee1c00" />
      </linearGradient>
      <path fillRule="evenodd" fill="url(#ring)" d="M36 8a28 28 0 1 0 0 56a28 28 0 1 0 0-56zm0 9.500a18.500 18.500 0 1 1 0 37a18.500 18.500 0 1 1 0-37z" />
    </Emoji>
  );
}

function RedCircle() {
  return (
    <Emoji label="Red circle">
      <linearGradient id="ball" x1="0" y1="0" x2="0" y2="1">
        <stop offset="0" stopColor="#f9a3ba" />
        <stop offset=".2" stopColor="#f38ba3" />
        <stop offset=".5" stopColor="#e5506f" />
        <stop offset="1" stopColor="#cf3450" />
      </linearGradient>
      <circle cx="36" cy="36" r="33" fill="url(#ball)" stroke="#d2607a" strokeWidth="1" />
    </Emoji>
  );
}

function Warning() {
  return (
    <Emoji label="Warning">
      <linearGradient id="sign" x1="0" y1="0" x2="0" y2="1">
        <stop offset="0" stopColor="#fdf08a" />
        <stop offset="1" stopColor="#f5c714" />
      </linearGradient>
      <path d="M33 5Q36 1 39 5L68.500 58Q70 62.500 66 63H6Q2 62.500 3.500 58Z" fill="#d9b021" />
      <path d="M36 6L67 60H5Z" fill="#f3d94b" stroke="#f3d94b" strokeWidth="2" strokeLinejoin="round" />
      <path d="M36 9.500L64 58.500H8Z" fill="url(#sign)" stroke="#4b4420" strokeWidth="1.500" strokeLinejoin="round" />
      <path d="M32 25Q36 20 40 25L38.500 44Q36 47 33.500 44Z" fill="#33301f" />
      <circle cx="36" cy="52" r="4" fill="#33301f" />
    </Emoji>
  );
}

function Siren() {
  return (
    <Emoji label="Police car light">
      <linearGradient id="dome" x1="0" y1="0" x2="0" y2="1">
        <stop offset="0" stopColor="#f8b8a8" />
        <stop offset=".35" stopColor="#f06a62" />
        <stop offset="1" stopColor="#e8181c" />
      </linearGradient>
      <linearGradient id="base" x1="0" y1="0" x2="1" y2="0">
        <stop offset="0" stopColor="#f4f4f4" />
        <stop offset=".45" stopColor="#8e9193" />
        <stop offset=".6" stopColor="#c9cbcc" />
        <stop offset="1" stopColor="#f7f7f7" />
      </linearGradient>
      <radialGradient id="bulb">
        <stop offset="0" stopColor="#fcc9cc" />
        <stop offset="1" stopColor="#fcc9cc" stopOpacity="0" />
      </radialGradient>
      <path d="M8.500 50V61Q12 69 36 69Q60 69 63.500 61V50Z" fill="url(#base)" />
      <path d="M9 53V30Q11 3.500 36 3.500Q61 3.500 63 30V53Q58 58 36 58Q14 58 9 53Z" fill="#c80f16" />
      <path d="M12 50V31Q14 6 36 6Q58 6 60 31V50Q54 55 36 55Q18 55 12 50Z" fill="url(#dome)" />
      <ellipse cx="28" cy="37" rx="12" ry="17" fill="url(#bulb)" />
      <ellipse cx="46" cy="32" rx="10" ry="13" fill="url(#bulb)" />
      <path d="M22 11Q14 18 14 34M50 11Q58 18 58 34" fill="none" stroke="#fff" strokeWidth="1.500" opacity=".5" />
    </Emoji>
  );
}

function PointDown() {
  return (
    <Emoji label="Backhand index pointing down">
      <linearGradient id="hand" x1="0" y1="0" x2="0" y2="1">
        <stop offset="0" stopColor="#f6c42c" />
        <stop offset=".35" stopColor="#ffd43a" />
        <stop offset="1" stopColor="#e8a21c" />
      </linearGradient>
      <path d="M19 4Q30 1 42 4V11Q48 19 55 25L63 28Q66 31 62 33Q55 36 46 31L44 33L45 65Q42 71 38.500 65L37 43Q33 46 30 43Q26 46 23 42Q16 43 15.500 36V22Q16 16 19 12Z" fill="url(#hand)" />
      <path d="M23 42Q21 38 23 35M30 43Q28 39 30 36M37 43Q36 38 39 35M45 31Q41 33 40 38" fill="none" stroke="#c98a18" strokeWidth="1.200" />
    </Emoji>
  );
}

function ViewGroup() {
  return (
    <button className="h-[131px] w-full border-t-[3px] border-[#2c5f4b] text-[48px] leading-[57px] font-medium text-[#25c063]">
      View group
    </button>
  );
}

function Message() {
  return (
    <article className="min-w-0 flex-1 rounded-b-[36px] bg-[#144d37] text-[48px] leading-[57px] text-[#f7f8fa]">
      <div className="px-7">
        <p className="flex h-[81px] items-center font-bold">
          <HollowCircle />
          Please provide:
        </p>
        <ol className="list-decimal pl-[93px]">
          <li>Your Name: Muhammad Hussain</li>
          <li>Age:18 City: Peshawar</li>
          <li>PMA/PAF/Navy:PMA</li>
          <li>Intermediate %/ 1st year%:1st Year</li>
          <li>Are you a repeater/ISSB forms Submitted:No I Am Not Repeater</li>
        </ol>
        <p className="mt-[57px] flex h-[81px] items-center">
          <RedCircle />
          Reply in Text only Kindly,
        </p>
        <p>no Audio.</p>
        <p className="mt-[57px] flex h-[81px] items-center whitespace-pre">
          <Warning />
          <b>Important Note</b> :
        </p>
        <p>
          Share a <b>Screenshot</b> after saving&nbsp; number InSha&apos;Allah then i will respond you. I&apos;m{" "}
          <b>MAHEEN ZAHRA,</b> Admin Head.
        </p>
        <p className="mt-[57px] flex h-[81px] items-center font-bold">
          <Siren />
          Join the Public group
        </p>
        <p className="font-bold">for Questions and Answers Session on Saturday:</p>
        <p className="flex h-[81px] items-center">
          <PointDown />
        </p>
        <div className="flex items-end justify-between pb-3">
          <a
            href="https://chat.whatsapp.com/II46rCvTedX4jZZDKC007f?mode=gi_t"
            className="w-0 flex-1 pb-[11px] whitespace-nowrap text-[#53bdeb] underline decoration-3 underline-offset-4 [text-decoration-skip-ink:none]"
          >
            https://chat.whatsapp.com
            <br />
            /II46rCvTedX4jZZDKC007f
            <br />
            ?mode=gi_t
          </a>
          <div className="flex h-10 items-center gap-3 text-[36px] leading-10 text-[#9fb5ab]">
            <time>12:21 PM</time>
            <svg className="h-9 w-12" viewBox="0 0 48 36" fill="none" stroke="currentColor" strokeWidth="4" aria-label="Delivered">
              <path d="M1 21L11 31L32 2M22 27L26 31L47 2" />
            </svg>
          </div>
        </div>
      </div>
      <ViewGroup />
    </article>
  );
}

function Composer() {
  return (
    <form className="relative flex items-center gap-3.5 pt-[26px] pr-[13px] pb-[13px] pl-3.5" onSubmit={(e) => e.preventDefault()}>
      <div className="flex h-[141px] min-w-0 flex-1 items-center rounded-full bg-[#20272a] px-10 text-[#8d9599]">
        <button type="button" aria-label="Stickers" className="shrink-0">
          <svg className="size-15" viewBox="0 0 60 60" fill="none" stroke="currentColor" strokeWidth="6">
            <path d="M33 57H22A19 19 0 0 1 3 38V22A19 19 0 0 1 22 3H38A19 19 0 0 1 57 22V36Q57 41 53 45L42 54Q38 57 33 57ZM56 33H47Q33 34 33 48V56" />
            <g fill="currentColor" stroke="none">
              <circle cx="19" cy="20" r="4.500" />
              <circle cx="40" cy="20" r="4.500" />
              <path d="M16 34H38L31 44Q19 45 16 34Z" />
            </g>
          </svg>
        </button>
        <input
          aria-label="Message"
          placeholder="Message"
          className="ml-[41px] min-w-0 flex-1 bg-transparent text-[54px] leading-16 outline-none placeholder:text-[#8d9599]"
        />
        <button type="button" aria-label="Attach" className="shrink-0">
          <svg className="h-15 w-[38px]" viewBox="0 0 38 60" fill="none" stroke="currentColor" strokeWidth="6" strokeLinecap="round">
            <path d="M35 15V41A16 16 0 0 1 3 41V13.500A10.500 10.500 0 0 1 24 13.500V40A5 5 0 0 1 14 40V15" />
          </svg>
        </button>
        <button type="button" aria-label="Camera" className="ml-24 shrink-0">
          <svg className="size-15" viewBox="0 0 60 60" fill="none" stroke="currentColor" strokeWidth="6">
            <path d="M3 15A3 3 0 0 1 6 12H18L23.500 6H36.500L42 12H54A3 3 0 0 1 57 15V51A3 3 0 0 1 54 54H6A3 3 0 0 1 3 51Z" />
            <circle cx="30" cy="33" r="10.500" />
          </svg>
        </button>
      </div>
      <button type="button" aria-label="Record voice message" className="flex size-36 shrink-0 items-center justify-center rounded-full bg-[#24c065] pb-1">
        <svg className="h-15 w-11" viewBox="0 0 44 60" fill="none" stroke="#0b1014" strokeWidth="6" strokeLinecap="round">
          <rect x="13" y="2" width="18" height="36" rx="8" fill="#0b1014" stroke="none" />
          <path d="M4 32Q6 47 22 47Q38 47 40 32M22 48V56" />
        </svg>
      </button>
    </form>
  );
}

function SystemNav() {
  return (
    <nav className="grid h-30 grid-cols-3 items-center justify-items-center bg-black px-[12.5%] text-[#999]">
      <button aria-label="Recent apps">
        <svg className="size-[42px]" viewBox="0 0 42 42" fill="none" stroke="currentColor" strokeWidth="6" strokeLinecap="round">
          <path d="M4 3H37M4 21H37M4 39H37" />
        </svg>
      </button>
      <button aria-label="Home">
        <svg className="size-[42px]" viewBox="0 0 42 42" fill="none" stroke="currentColor" strokeWidth="6">
          <circle cx="21" cy="21" r="18" />
        </svg>
      </button>
      <button aria-label="Go back">
        <svg className="size-[42px]" viewBox="0 0 42 42" fill="none" stroke="currentColor" strokeWidth="6" strokeLinecap="round" strokeLinejoin="round">
          <path d="M16 3L5 9H24A13 15 0 0 1 24 39H5" />
        </svg>
      </button>
    </nav>
  );
}

export default function App() {
  return (
    <div className="flex h-screen flex-col overflow-hidden bg-[#0b1014] font-[Roboto,sans-serif]">
      <StatusBar />
      <ChatHeader />
      <main className="relative flex min-h-0 flex-1 flex-col">
        <Doodles />
        <section className="relative flex min-h-0 flex-1 flex-col justify-end overflow-hidden">
          <div className="flex items-start gap-6 pr-[51px] pl-[207px]">
            <button aria-label="Forward" className="mt-86 flex size-24 shrink-0 items-center justify-center rounded-full bg-[#101a20]/75">
              <svg className="h-10 w-15" viewBox="0 0 60 40" fill="none" stroke="#fff" strokeWidth="6" strokeLinecap="round" strokeLinejoin="round">
                <path d="M4 37V30Q4 17 17 17H42" />
                <path d="M28 4L42 17L28 30M43 4L57 17L43 30" />
              </svg>
            </button>
            <Message />
          </div>
        </section>
        <Composer />
      </main>
      <SystemNav />
    </div>
  );
}
